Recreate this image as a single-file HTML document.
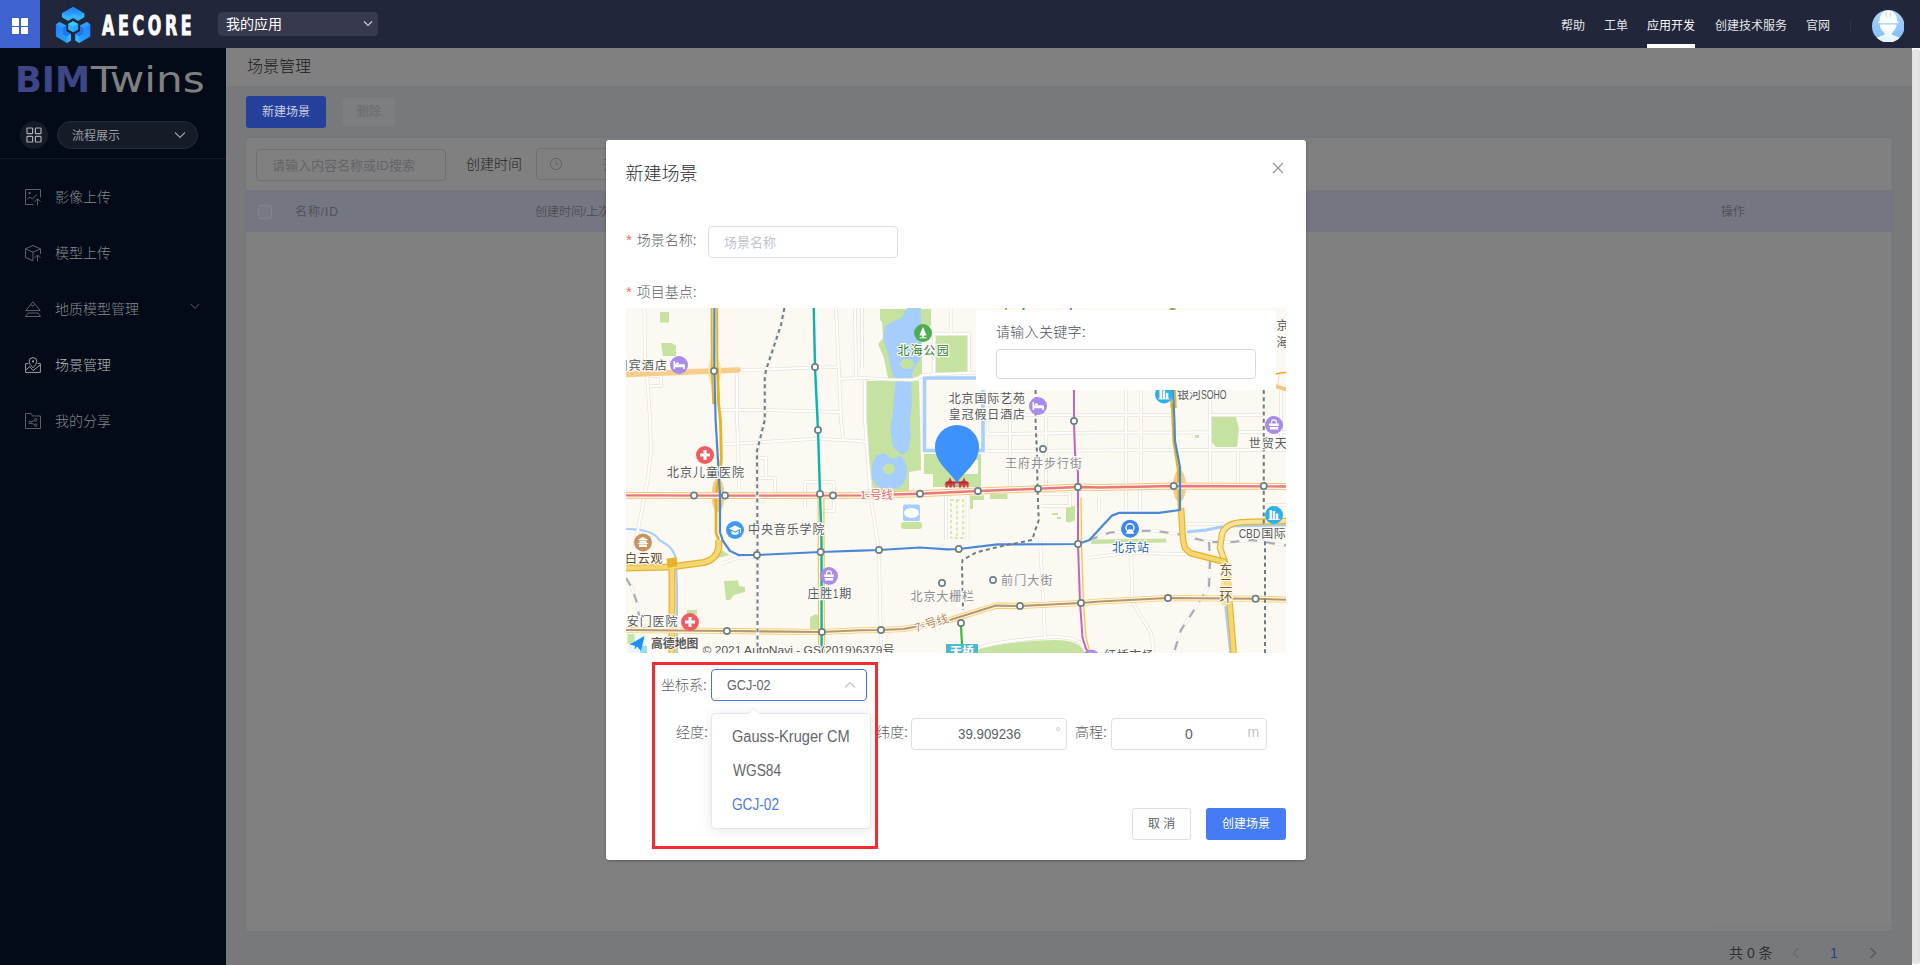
<!DOCTYPE html>
<html lang="zh-CN">
<head>
<meta charset="utf-8">
<title>场景管理</title>
<style>
*{box-sizing:border-box;margin:0;padding:0}
html,body{width:1920px;height:965px;overflow:hidden;background:#78797b}
body{font-family:"Liberation Sans","Noto Sans CJK SC",sans-serif;font-size:14px;color:#333;position:relative;-webkit-font-smoothing:antialiased}
.abs{position:absolute}
.t{position:absolute;white-space:nowrap;line-height:1}
.sx{transform-origin:0 0}
/* ---------- top bar ---------- */
#top{position:absolute;left:0;top:0;width:1920px;height:48px;background:#22263b;z-index:30}
#apps{position:absolute;left:0;top:0;width:40px;height:48px;background:#3e63d0}
#apps i{position:absolute;width:7.7px;height:7.7px;background:#fff;border-radius:.8px}
#appsel{position:absolute;left:218px;top:12px;width:160px;height:24px;background:#373a4e;border-radius:4px}
.nav{position:absolute;top:18.6px;font-size:12px;color:#e4e5e9;line-height:14px;white-space:nowrap}
/* ---------- sidebar ---------- */
#side{position:absolute;left:0;top:48px;width:226px;height:917px;background:#020b17;z-index:20}
.mi{position:absolute;left:55px;font-size:14px;font-weight:300;color:#85888e;line-height:16px;white-space:nowrap}
.mic{position:absolute;left:25px;width:16px;height:16px;overflow:visible}
/* ---------- content (dimmed by mask) ---------- */
#content{position:absolute;left:226px;top:48px;width:1686px;height:917px;background:#78797b;overflow:hidden}
#phead{position:absolute;left:0;top:0;width:1686px;height:38px;background:#808080}
#card{position:absolute;left:19px;top:89px;width:1648px;height:795px;background:#808080;border:1px solid #74767f;border-radius:4px}
#thead{position:absolute;left:0;top:52px;width:1646px;height:42px;background:#747781}
#scroll{position:absolute;left:1912px;top:48px;width:8px;height:917px;background:#fafafa;z-index:25}
#scroll b{position:absolute;left:.2px;top:1.4px;width:7.8px;height:914.2px;border-radius:3.5px;background:linear-gradient(90deg,#e0e0e0,#e5e5e5 40%,#e3e3e3 80%,#dadada)}
/* ---------- modal ---------- */
#modal{position:absolute;left:606px;top:140px;width:700px;height:720px;background:#fff;border-radius:3px;box-shadow:0 1px 3px rgba(0,0,0,.3);z-index:40}
.inp{position:absolute;height:32px;border:1px solid #dcdfe6;border-radius:4px;background:#fff}
.lab{position:absolute;font-size:14px;color:#5c5e62;line-height:16px;white-space:nowrap;font-weight:300}
</style>
</head>
<body>

<!-- ================= CONTENT ================= -->
<div id="content">
  <div id="phead"><span class="t" style="left:21px;top:11px;font-size:16px;color:#1a1b1d;font-weight:300">场景管理</span></div>
  <div class="abs" style="left:20px;top:48px;width:80px;height:32px;background:#24409b;border-radius:3px"><span class="t" style="left:16px;top:10px;font-size:12px;color:#c9cede">新建场景</span></div>
  <div class="abs" style="left:116px;top:49px;width:54px;height:30px;background:#7d7e80;border:1px solid #7a7b7e;border-radius:3px"><span class="t" style="left:14px;top:8px;font-size:12px;color:#6a6b6e">删除</span></div>
  <div id="card">
    <div class="abs" style="left:10px;top:11px;width:190px;height:32px;border:1px solid #6f7074;border-radius:4px"><span class="t" style="left:15px;top:9px;font-size:13px;color:#636467">请输入内容名称或ID搜索</span></div>
    <span class="t" style="left:220px;top:19px;font-size:14px;color:#222325;font-weight:300">创建时间</span>
    <div class="abs" style="left:290px;top:10px;width:220px;height:32px;border:1px solid #6f7074;border-radius:4px">
      <svg class="abs" style="left:12px;top:8px" width="14" height="14" viewBox="0 0 14 14"><circle cx="7" cy="7" r="5.6" fill="none" stroke="#646568" stroke-width="1"/><path d="M7 3.6V7.2H9.8" fill="none" stroke="#646568" stroke-width="1"/></svg>
      <span class="t" style="left:66px;top:9px;font-size:13px;color:#636467">开始日期</span>
    </div>
    <div id="thead">
      <div class="abs" style="left:12px;top:15px;width:14px;height:14px;border:1px solid #82848c;border-radius:2px;background:#787a83"></div>
      <span class="t" style="left:49px;top:16px;font-size:12px;color:#505258;letter-spacing:.9px">名称/ID</span>
      <span class="t" style="left:289px;top:16px;font-size:12px;color:#505258">创建时间/上次修改时间</span>
      <span class="t" style="left:1475px;top:16px;font-size:12px;color:#505258">操作</span>
    </div>
    <div class="abs" style="left:1466px;top:788px;width:180px;height:1px;background:#7a7b80"></div>
  </div>
  <span class="t" style="left:1503px;top:898px;font-size:14px;color:#303134">共 0 条</span>
  <svg class="abs" style="left:1566px;top:899px" width="8" height="12" viewBox="0 0 8 12"><path d="M6.5 1L1.5 6L6.5 11" fill="none" stroke="#66676b" stroke-width="1.3"/></svg>
  <span class="t" style="left:1604px;top:898px;font-size:14px;color:#24409b">1</span>
  <svg class="abs" style="left:1643px;top:899px" width="8" height="12" viewBox="0 0 8 12"><path d="M1.5 1L6.5 6L1.5 11" fill="none" stroke="#55565b" stroke-width="1.3"/></svg>
</div>
<div id="scroll"><b></b></div>

<!-- ================= SIDEBAR ================= -->
<div id="side">
  <span class="t" id="bim" style="left:15px;top:13.2px;font-family:'DejaVu Sans','Liberation Sans',sans-serif;font-size:36.2px;line-height:38px;font-weight:bold;color:#3f4688;transform:scaleX(.974);transform-origin:0 0">BIM</span>
  <span class="t" id="twins" style="left:90.5px;top:13.2px;font-family:'DejaVu Sans','Liberation Sans',sans-serif;font-size:36.2px;line-height:38px;color:#808080;transform:scaleX(1.167);transform-origin:0 0">Twins</span>
  <div class="abs" style="left:20px;top:73px;width:28px;height:28px;border-radius:14px;background:#161b26">
    <svg class="abs" style="left:6px;top:6px" width="16" height="16" viewBox="0 0 16 16" fill="none" stroke="#a9acb3" stroke-width="1.2"><rect x="1" y="1" width="5.6" height="5.6" rx=".6"/><rect x="9.4" y="1" width="5.6" height="5.6" rx=".6"/><rect x="1" y="9.4" width="5.6" height="5.6" rx=".6"/><rect x="9.4" y="9.4" width="5.6" height="5.6" rx=".6"/></svg>
  </div>
  <div class="abs" style="left:57px;top:73px;width:141px;height:28px;border-radius:14px;background:#161c27;border:1px solid #262b36">
    <span class="t" style="left:14px;top:8.3px;font-size:12px;color:#9a9da3">流程展示</span>
    <svg class="abs" style="left:116px;top:9px" width="12" height="8" viewBox="0 0 12 8"><path d="M1 1.5L6 6.5L11 1.5" fill="none" stroke="#9b9ea5" stroke-width="1.2"/></svg>
  </div>
  <div class="abs" style="left:0;top:110px;width:226px;height:1px;background:#141a25"></div>
  <svg class="mic" style="top:141px" viewBox="0 0 16 16" fill="none" stroke="#62666c" stroke-width=".95"><path d="M8.5,15.5H.5V.5H15.5V8.5"/><circle cx="4.6" cy="4.2" r="1.1" fill="#62666c" stroke="none"/><path d="M2.6,10L5,8L7.4,10L11.8,5.4"/><path d="M12.5,16.5V10M9.5,12.8L12.5,9.8L15.5,12.8"/></svg>
  <svg class="mic" style="top:197px" viewBox="0 0 16 16" fill="none" stroke="#62666c" stroke-width=".95"><path d="M8,.5L15.5,3.8L8,7.2L.5,3.8ZM.5,3.8V12.5L8,15.8V7.2M15.5,3.8V9"/><path d="M12.5,16.5V10.5M9.5,13L12.5,10L15.5,13"/></svg>
  <svg class="mic" style="top:253px" viewBox="0 0 16 16" fill="none" stroke="#62666c" stroke-width=".95"><path d="M8,.8L15.2,9.5H.8Z"/><path d="M6.2,4.2L8,5.2L9.2,3.4"/><path d="M3,12H13L15.5,15.5H.5Z"/></svg>
  <svg class="mic" style="top:309px" viewBox="0 0 16 16" fill="none" stroke="#9c9ea3" stroke-width="1"><path d="M8,10.8C5.6,8.2 4.2,6.4 4.2,4.4A3.8,3.8 0 0 1 11.8,4.4C11.8,6.4 10.4,8.2 8,10.8Z"/><circle cx="8" cy="4.4" r="1.1" fill="#9c9ea3" stroke="none"/><path d="M3.4,6.6H.6V15.4H15.4V6.6H12.6"/><path d="M.8,13L4.6,9.6L8,13.6L15,8.2"/></svg>
  <svg class="mic" style="top:365px" viewBox="0 0 16 16" fill="none" stroke="#62666c" stroke-width=".95"><path d="M.5,15.5V.5H6L7.5,3H15.5V15.5Z"/><circle cx="10.8" cy="6.8" r="1.2"/><circle cx="10.8" cy="12.2" r="1.2"/><circle cx="5" cy="9.5" r="1.2"/><path d="M6.1,9L9.7,7.3M6.1,10L9.7,11.7"/></svg>
  <svg class="abs" style="left:190px;top:255px" width="10" height="7" viewBox="0 0 10 7"><path d="M.8,1L5,5.4L9.2,1" fill="none" stroke="#5a5e64" stroke-width="1"/></svg>
  <span class="mi" style="top:141px">影像上传</span>
  <span class="mi" style="top:197px">模型上传</span>
  <span class="mi" style="top:253px">地质模型管理</span>
  <span class="mi" style="top:309px;color:#b4b6ba">场景管理</span>
  <span class="mi" style="top:365px">我的分享</span>
</div>

<!-- ================= TOP BAR ================= -->
<div id="top">
  <div id="apps"><i style="left:11.8px;top:18px"></i><i style="left:20.5px;top:18px"></i><i style="left:11.8px;top:26.7px"></i><i style="left:20.5px;top:26.7px"></i></div>
  <svg class="abs" style="left:54px;top:5px" width="38" height="40" viewBox="54 5 38 40">
    <defs>
      <linearGradient id="lg1" x1="0" y1="0" x2="0" y2="1"><stop offset="0" stop-color="#1b78ff"/><stop offset="1" stop-color="#2fb0ff"/></linearGradient>
      <linearGradient id="lg2" x1="0" y1="0" x2="0" y2="1"><stop offset="0" stop-color="#2aa6ff"/><stop offset="1" stop-color="#36c8fb"/></linearGradient>
      <linearGradient id="lg3" x1="0" y1="0" x2="1" y2="1"><stop offset="0" stop-color="#1c80ff"/><stop offset="1" stop-color="#2ea8ff"/></linearGradient>
      <linearGradient id="lg4" x1="1" y1="0" x2="0" y2="1"><stop offset="0" stop-color="#1c80ff"/><stop offset="1" stop-color="#2ea8ff"/></linearGradient>
    </defs>
    <path d="M73.1,6.9L84.4,13.4V17.2L78.1,20.9L73.1,18.1L68.1,20.9L61.9,17.2V13.4Z" fill="#34b4ff"/>
    <path d="M73.1,6.9L84.4,13.4L78.1,17.1L73.1,14.3L68.1,17.1L61.9,13.4Z" fill="url(#lg1)"/>
    <path d="M73.1,21.2L78.1,24V29.4L73.1,32.2L68.1,29.4V24Z" fill="#2db3f7"/>
    <path d="M73.1,21.2L78.1,24L73.1,26.8L68.1,24Z" fill="#3bc9fc"/>
    <path d="M73.1,26.8L78.1,24V29.4L73.1,32.2Z" fill="#28a9f3"/>
    <path d="M55.9,24.4L59.4,21.9L66.2,25.6V31.2L70.9,34V40.6L66.9,43.1L55.9,36.6Z" fill="url(#lg3)"/>
    <path d="M55.9,24.4L59.4,21.9L66.2,25.6L62.8,28.1Z" fill="#2c9eff"/>
    <path d="M62.8,28.1L66.2,25.6V31.2L70.9,34L67,36.4L62.8,33.8Z" fill="#1b7af2"/>
    <path d="M67,36.4L70.9,34V40.6L66.9,43.1Z" fill="#30b6ff"/>
    <path d="M90.3,24.4L86.9,21.9L80,25.6V31.2L75.3,34V40.6L79.4,43.1L90.3,36.6Z" fill="url(#lg4)"/>
    <path d="M90.3,24.4L86.9,21.9L80,25.6L83.4,28.1Z" fill="#2c9eff"/>
    <path d="M83.4,28.1L80,25.6V31.2L75.3,34L79.2,36.4L83.4,33.8Z" fill="#1b7af2"/>
    <path d="M79.2,36.4L75.3,34V40.6L79.4,43.1Z" fill="#30b6ff"/>
  </svg>
  <span class="t" id="aecore" style="left:102px;top:9.6px;font-family:'DejaVu Sans','Liberation Sans',sans-serif;font-stretch:condensed;font-size:27.2px;line-height:32px;font-weight:bold;color:#fff;letter-spacing:5.6px;-webkit-text-stroke:.9px #fff;transform:scaleX(0.65);transform-origin:0 0">AECORE</span>
  <div id="appsel"><span class="t" style="left:8px;top:5px;font-size:14px;color:#fff">我的应用</span>
    <svg class="abs" style="left:145px;top:8px" width="10" height="8" viewBox="0 0 10 8"><path d="M1 1.5L5 5.5L9 1.5" fill="none" stroke="#c8c9d0" stroke-width="1.2"/></svg></div>
  <span class="nav" style="left:1561px">帮助</span>
  <span class="nav" style="left:1604px">工单</span>
  <span class="nav" style="left:1647px;color:#fff">应用开发</span>
  <div class="abs" style="left:1647px;top:44px;width:48px;height:4px;background:#fff"></div>
  <span class="nav" style="left:1715px">创建技术服务</span>
  <span class="nav" style="left:1806px">官网</span>
  <div class="abs" style="left:1850px;top:20px;width:1.4px;height:12px;background:#2f3349"></div>
  <svg class="abs" id="avatar" style="left:1871.8px;top:9.6px" width="32.6" height="32.6" viewBox="0 0 32 32">
    <defs><linearGradient id="av" x1="0" y1="0" x2="0" y2="1"><stop offset="0" stop-color="#acd6fd"/><stop offset="1" stop-color="#7fbaf6"/></linearGradient>
    <linearGradient id="avb" x1="0" y1="0" x2="0" y2="1"><stop offset="0" stop-color="#fff"/><stop offset="1" stop-color="#e6f1fe"/></linearGradient>
    <clipPath id="avc"><circle cx="16" cy="16" r="16"/></clipPath></defs>
    <circle cx="16" cy="16" r="16" fill="url(#av)"/>
    <g clip-path="url(#avc)">
      <path d="M7.8,14.3h16.2c.3,3 -1.2,4.6 -3.4,7.2c-1.6,1.8 -1.6,2.6 .4,3.4c3,1.1 5.6,2 7.4,3.6v4.5H3.4v-4.5c1.8,-1.6 4.4,-2.5 7.4,-3.6c2,-.8 2,-1.6 .4,-3.4c-2.2,-2.6 -3.7,-4.2 -3.4,-7.2z" fill="url(#avb)"/>
      <path d="M7.3,11.6c0,-7 3.6,-11 8.7,-11s8.7,4 8.7,11z" fill="#fff"/>
      <rect x="6" y="11.2" width="20" height="1.9" rx=".9" fill="#fff"/>
      <path d="M13.2,2.2l.6,5h1l-.4,-5zM18.8,2.2l-.6,5h-1l.4,-5z" fill="#b9dcfd"/>
    </g>
  </svg>
</div>

<!-- ================= MODAL ================= -->
<div id="modal">
  <span class="t" style="left:19.6px;top:24.5px;font-size:18px;color:#2c2d30;font-weight:300">新建场景</span>
  <svg class="abs" style="left:666px;top:22px" width="12" height="12" viewBox="0 0 12 12"><path d="M1 1L11 11M11 1L1 11" stroke="#8c8f96" stroke-width="1.1"/></svg>

  <span class="lab" style="left:20px;top:92px"><span style="color:#f56c6c;font-size:15px;font-weight:400;margin-right:1px">*</span> 场景名称:</span>
  <div class="inp" style="left:102px;top:86px;width:190px"><span class="t" style="left:15px;top:9px;font-size:13px;color:#c0c4cc">场景名称</span></div>
  <span class="lab" style="left:20px;top:144px"><span style="color:#f56c6c;font-size:15px;font-weight:400;margin-right:1px">*</span> 项目基点:</span>

  <div id="map" class="abs" style="left:20px;top:168px;width:660px;height:345px;background:#fcf9f2;overflow:hidden">
<svg width="660" height="345" viewBox="0 0 660 345" style="position:absolute;left:0;top:0;display:block" font-family="Liberation Sans,Noto Sans CJK SC,sans-serif">
<rect width="660" height="345" fill="#fcf9f2"/>
<g fill="#c6e2a0">
<path d="M254,1 L305,1 L305,18 L296,18 L296,66 L287,70 L262,70 L258,50 L252,36 L257,30 L256,14 L254,12Z"/>
<path d="M241,73 L293,73 L294,112 L295,162 L283,164 L283,184 L247,184 L243,150 L241,112Z"/>
<path d="M298,146 L355,146 L355,179 L307,179 L307,166 L298,166Z"/>
<path d="M310,28 L341.5,28 L341.5,64.5 L310,64.5Z"/>
<path d="M34,4 L43,4 L43,14.5 L34,14.5Z"/>
<path d="M35,35 L46,35 L50,38 L50,48 L37,48Z"/>
<path d="M98,273 L112,272.5 L113,278 L119,279 L119,284 L108,287 L104,292 L100,292Z"/>
<path d="M184,309 L190,306 L193,308 L193,321 L184,321Z"/>
<path d="M585,109 L610,109 L613,121 L611,139 L590,139 L585,133Z"/>
<path d="M440,198 L449,198 L449,212 L444,214.5 L440,214Z"/>
<path d="M344,187.5 L358,187.5 L358,192 L347,192 L347,201 L344,201Z"/>
<path d="M364,186 L381.5,186 L381.5,191 L364,191Z"/>
<path d="M465,231.5 L540,230.5 L540,234.5 L465,236Z"/>
<path d="M92,240 L104,247 L92,250Z"/>
<path d="M61,302 L71,302 L71,306 L61,306Z"/>
<path d="M569,127 L573,127 L573,130 L569,130Z"/>
<rect x="275" y="214" width="21" height="7" rx="3"/>
<path d="M352,345 L352,341 Q385,333 428,332 Q450,332 457,341 L458,345 Z"/>
</g>
<rect x="338" y="152" width="14" height="14" fill="#fcf9f2"/>
<g fill="#a6cefc">
<path d="M281.5,0 L295,0 L295,40 L294,52 L288,60 L286,66 L286,70 L268,70 L265,60 L262,45 L257,30 L259,18 L266,14 L275,10Z"/>
<path d="M270,72 L285,72 L286,95 L284,112 L285,128 L282,143 L276,147 L267,139 L264,122 L267,104 L268,88Z"/>
<path d="M251,147 Q258,143 262,148 L268,151 Q272,146 277,150 Q283,158 280,170 Q277,181 264,181 Q250,182 246,170 Q244,155 251,147Z"/>
<rect x="277" y="196.4" width="17" height="16.6" rx="2"/>
</g>
<ellipse cx="281" cy="56" rx="7" ry="5" fill="#c6e2a0"/>
<ellipse cx="263" cy="161" rx="6" ry="5.5" fill="#c6e2a0"/>
<ellipse cx="285.5" cy="205" rx="7.5" ry="5" fill="#fff"/>
<g fill="none" stroke="#a6cefc">
<path d="M0,221 C20,221 30,226 33,232 C45,238 49,244 50,252 L51,278 L51,345" stroke-width="2"/>
<path d="M561,224 L580,222 L600,218 L660,217" stroke-width="3"/>
<path d="M600,298 L605,345" stroke-width="3.5"/>
<rect x="298.5" y="70" width="58.5" height="72.5" stroke-width="3.6" stroke="#a9d0fb"/>
</g>
<g fill="none" stroke="#c6e2a0" stroke-width="1.4" stroke-dasharray="3 2.5"><rect x="325" y="192" width="12" height="38"/><path d="M331,192V230"/></g>
<g fill="#c6e2a0"><rect x="426" y="205" width="6" height="2"/><rect x="431" y="209" width="4" height="2"/></g>
<g fill="none" stroke="#e8e3d9" stroke-width="3.6" stroke-linejoin="round">
<path d="M18.4,0 L19,50 L21,67 L24,112 L25,143 L22,170 L11.5,224.5 L8,240"/>
<path d="M112,62 L140,61.5 L189,59.5 L212,59"/>
<path d="M210,0 L212.75,59.5 L215,112 L217,131"/>
<path d="M229,0 L230,70"/>
<path d="M213,70.75 L240,70 L262,71.5 L285,72 L292,70.5 L296.5,67 L350,64.5"/>
<path d="M111,64 L111,112 L112,135 L113,182"/>
<path d="M94,102 L139,102 L214,104"/>
<path d="M24,68 L35,68 L35,78 L24,78"/>
<path d="M96.5,136.4 L191.5,130.75 L234,133 L240,134"/>
<path d="M308,68 L308,26 L343,26 L343,66"/>
<path d="M324.6,0 L324.6,26"/>
<path d="M239,72 L239,112 L245,193 L251.5,232 L253,242 L255,345"/>
<path d="M320,188 L320,232"/>
<path d="M341.5,188 L341.5,232"/>
<path d="M361.5,82 L361.5,126.4 L474,124.5 L546.5,124.5 L584,124.3"/>
<path d="M614,124 L660,124"/>
<path d="M361.5,143 L552,142"/>
<path d="M361.5,107 L546,107"/>
<path d="M514.8,82 L514.8,178"/>
<path d="M420,107 L420,178"/>
<path d="M236,0 L236,60"/>
<path d="M140,170 L140,150 L131.5,150"/>
<path d="M384,82 L384,180"/>
<path d="M500,82 L500,202"/>
<path d="M552.75,142 L660,142"/>
<path d="M584,82 L584,175"/>
<path d="M582.75,107 L637,107"/>
<path d="M414,232 L419,330"/>
<path d="M505,244.5 L506.5,294.5 L525,324.5 L527.75,345"/>
<path d="M179,200 L179,174 L207.75,174 L207.75,203 L197,203"/>
<path d="M131.5,170 L149,170 L149,185"/>
<path d="M514,182 L514,202"/>
<path d="M560,215.75 L599,215.75"/>
<path d="M473,190 L473,205"/>
<path d="M612,142 L612,178"/>
<path d="M640,197 L660,197"/>
<path d="M462,250 L500,245 L560,246"/>
<path d="M97,255 L112,250 L131,249"/>
<path d="M655,82 L655,142"/>
<path d="M415,186 L444,186 L444,198 L415,198"/>
<path d="M340,345 Q362,333 428,329 Q452,329 460,340"/>
</g>
<g fill="none" stroke="#ffffff" stroke-width="2.2" stroke-linejoin="round">
<path d="M18.4,0 L19,50 L21,67 L24,112 L25,143 L22,170 L11.5,224.5 L8,240"/>
<path d="M112,62 L140,61.5 L189,59.5 L212,59"/>
<path d="M210,0 L212.75,59.5 L215,112 L217,131"/>
<path d="M229,0 L230,70"/>
<path d="M213,70.75 L240,70 L262,71.5 L285,72 L292,70.5 L296.5,67 L350,64.5"/>
<path d="M111,64 L111,112 L112,135 L113,182"/>
<path d="M94,102 L139,102 L214,104"/>
<path d="M24,68 L35,68 L35,78 L24,78"/>
<path d="M96.5,136.4 L191.5,130.75 L234,133 L240,134"/>
<path d="M308,68 L308,26 L343,26 L343,66"/>
<path d="M324.6,0 L324.6,26"/>
<path d="M239,72 L239,112 L245,193 L251.5,232 L253,242 L255,345"/>
<path d="M320,188 L320,232"/>
<path d="M341.5,188 L341.5,232"/>
<path d="M361.5,82 L361.5,126.4 L474,124.5 L546.5,124.5 L584,124.3"/>
<path d="M614,124 L660,124"/>
<path d="M361.5,143 L552,142"/>
<path d="M361.5,107 L546,107"/>
<path d="M514.8,82 L514.8,178"/>
<path d="M420,107 L420,178"/>
<path d="M236,0 L236,60"/>
<path d="M140,170 L140,150 L131.5,150"/>
<path d="M384,82 L384,180"/>
<path d="M500,82 L500,202"/>
<path d="M552.75,142 L660,142"/>
<path d="M584,82 L584,175"/>
<path d="M582.75,107 L637,107"/>
<path d="M414,232 L419,330"/>
<path d="M505,244.5 L506.5,294.5 L525,324.5 L527.75,345"/>
<path d="M179,200 L179,174 L207.75,174 L207.75,203 L197,203"/>
<path d="M131.5,170 L149,170 L149,185"/>
<path d="M514,182 L514,202"/>
<path d="M560,215.75 L599,215.75"/>
<path d="M473,190 L473,205"/>
<path d="M612,142 L612,178"/>
<path d="M640,197 L660,197"/>
<path d="M462,250 L500,245 L560,246"/>
<path d="M97,255 L112,250 L131,249"/>
<path d="M655,82 L655,142"/>
<path d="M415,186 L444,186 L444,198 L415,198"/>
<path d="M340,345 Q362,333 428,329 Q452,329 460,340"/>
</g>
<path d="M463,232 L484,224.5 L527,222.6 L551.5,226 L583,234 L606,234 L626.5,232 L660,237.6" fill="none" stroke="#e4e4e0" stroke-width="3.2"/>
<path d="M463,232 L484,224.5 L527,222.6 L551.5,226 L583,234 L606,234 L626.5,232 L660,237.6" fill="none" stroke="#fff" stroke-width="2"/>
<path d="M463,232 L484,224.5 L527,222.6 L551.5,226 L583,234 L606,234 L626.5,232 L660,237.6" fill="none" stroke="#a5abae" stroke-width="2" stroke-dasharray="9 9"/>
<path d="M583,234 L584,253 L583,278 L566.5,304.5 L555,322 L547.75,345" fill="none" stroke="#e4e4e0" stroke-width="3.2"/>
<path d="M583,234 L584,253 L583,278 L566.5,304.5 L555,322 L547.75,345" fill="none" stroke="#fff" stroke-width="2"/>
<path d="M583,234 L584,253 L583,278 L566.5,304.5 L555,322 L547.75,345" fill="none" stroke="#a5abae" stroke-width="2" stroke-dasharray="9 9"/>
<path d="M0,270 L6,280 L11,295 L13,308" fill="none" stroke="#e4e4e0" stroke-width="3.2"/>
<path d="M0,270 L6,280 L11,295 L13,308" fill="none" stroke="#fff" stroke-width="2"/>
<path d="M0,270 L6,280 L11,295 L13,308" fill="none" stroke="#a5abae" stroke-width="2" stroke-dasharray="9 9"/>
<path d="M0,66.4 L112,62" fill="none" stroke="#f6cd8b" stroke-width="5.6" stroke-linecap="round"/>
<ellipse cx="88.5" cy="63" rx="6.5" ry="15" fill="#f7e2a0"/>
<ellipse cx="92" cy="187" rx="6.5" ry="17" fill="#f3cc8a"/>
<ellipse cx="553.5" cy="178" rx="6.5" ry="16" fill="#f3cc8a"/>
<path d="M88.4,0 L88.6,62 L90,96" fill="none" stroke="#e7b41f" stroke-width="7.5" stroke-linejoin="round"/>
<path d="M88.4,0 L88.6,62 L90,96" fill="none" stroke="#fdf4d4" stroke-width="3.7" stroke-linejoin="round"/>
<path d="M91.6,60 L92.6,96 L94.4,112 L95.4,150 L94.4,164 L91.2,178 L90,190 L90,225 L92.75,232" fill="none" stroke="#e6b422" stroke-width="2.8" stroke-linejoin="round"/>
<path d="M92.75,232 L92.75,239 Q91,251 78,254.5 L44,259 L0,260" fill="none" stroke="#e5b32e" stroke-width="7" stroke-linejoin="round"/>
<path d="M46,258 L46,345" fill="none" stroke="#e5b32e" stroke-width="7"/>
<path d="M92.75,232 L92.75,239 Q91,251 78,254.5 L44,259 L0,260" fill="none" stroke="#f6d670" stroke-width="4.6" stroke-linejoin="round"/>
<path d="M46,258 L46,345" fill="none" stroke="#f6d670" stroke-width="4.6"/>
<rect x="41" y="250" width="10" height="9" fill="#e5b32e" transform="rotate(-8 46 254)"/>
<path d="M546.5,0 L547,82 L547.6,100" fill="none" stroke="#e7b41f" stroke-width="6.2" stroke-linejoin="round"/>
<path d="M546.5,0 L547,82 L547.6,100" fill="none" stroke="#fdf4d4" stroke-width="2.4000000000000004" stroke-linejoin="round"/>
<path d="M546,96 L546.6,112 L547.6,133 L551.8,160 L552.6,180 L553,202" fill="none" stroke="#e6b422" stroke-width="2.4" stroke-linejoin="round"/>
<path d="M660,213 L620,214 Q600,214 596,226 L594,240 L599,254" fill="none" stroke="#e5b32e" stroke-width="6.5" stroke-linejoin="round"/>
<path d="M660,213 L620,214 Q600,214 596,226 L594,240 L599,254" fill="none" stroke="#f9e39a" stroke-width="4.2" stroke-linejoin="round"/>
<path d="M555,200 L557,232 L559,240 L564,245 L599,254 L604,299.5 L607.75,345" fill="none" stroke="#e5b32e" stroke-width="6.5" stroke-linejoin="round" />
<path d="M555,200 L557,232 L559,240 L564,245 L599,254 L604,299.5 L607.75,345" fill="none" stroke="#f6d670" stroke-width="4.3" stroke-linejoin="round" />
<rect x="595" y="255" width="11" height="42" fill="#f7dc80" opacity=".75"/>
<path d="M0,187.4 L99,187.6 L234,187.4 L294,185.75 L351.9,183 L412,180.75 L451.9,179 L474,179.5 L547.75,178 L660,178.5" fill="none" stroke="#f3c67e" stroke-width="6.8"/>
<path d="M0,187.4 L99,187.6 L234,187.4 L294,185.75 L351.9,183 L412,180.75 L451.9,179 L474,179.5 L547.75,178 L660,178.5" fill="none" stroke="#fffaf0" stroke-width="4.8"/>
<path d="M0,187.4 L99,187.6 L234,187.4 L294,185.75 L351.9,183 L412,180.75 L451.9,179 L474,179.5 L547.75,178 L660,178.5" fill="none" stroke="#e9777b" stroke-width="2.3"/>
<path d="M0,322 L100.9,323 L195.9,324 L234,322.25 L255,322 L277.75,321 L324,312 L370,297.6 L394,298 L455,295 L474,293.5 L542,290 L629.6,290.75 L660,291.75" fill="none" stroke="#f2cf6e" stroke-width="6.2" stroke-linejoin="round"/>
<path d="M0,322 L100.9,323 L195.9,324 L234,322.25 L255,322 L277.75,321 L324,312 L370,297.6 L394,298 L455,295 L474,293.5 L542,290 L629.6,290.75 L660,291.75" fill="none" stroke="#fff8e4" stroke-width="4.4" stroke-linejoin="round"/>
<path d="M0,322 L100.9,323 L195.9,324 L234,322.25 L255,322 L277.75,321 L324,312 L370,297.6 L394,298 L455,295 L474,293.5 L542,290 L629.6,290.75 L660,291.75" fill="none" stroke="#b8966f" stroke-width="2.1" stroke-linejoin="round"/>
<path d="M195,190 L195.6,345" fill="none" stroke="#f1c95a" stroke-width="7"/>
<path d="M195,190 L195.6,345" fill="none" stroke="#fff8e4" stroke-width="4.6"/>
<path d="M455,190 L455.5,236 L457.5,294.5 L460,329.5 L463,341" fill="none" stroke="#f1c95a" stroke-width="1.4"/>
<path d="M88.4,0 L88.3,62 L89.6,112 L94,187 L94,224.5 L97,233 L104,243 L112.75,247 L130.9,247 L194.6,244 L234,242.6 L253,242 L294,239.5 L321.5,241.4 L332.75,241 L371.5,236.4 L452,236 L463.4,232 L486,207.6 L493.4,204.8 L532.75,204.8 L554,202 L554,159.5 L549,133 L548.4,112 L547,82 L546.5,0" fill="none" stroke="#4a88d6" stroke-width="2.2" stroke-linejoin="round"/>
<path d="M187.75,0 L189,59 L191.5,112 L192,122 L194,185.75 L195.5,232 L195.6,345" fill="none" stroke="#06b6ad" stroke-width="2.4" stroke-linejoin="round"/>
<path d="M445,0 L448,82 L448,113 L449,145.75 L452,164.5 L452,236 L454,294.5 L456.5,329.5 L460,341 L465,345" fill="none" stroke="#c963b6" stroke-width="2" stroke-linejoin="round"/>
<path d="M335,318 L336,336" fill="none" stroke="#3db54a" stroke-width="2.2" stroke-linejoin="round"/>
<rect x="379" y="0" width="2" height="2" fill="#e8a020"/><rect x="396.5" y="0" width="2" height="2" fill="#2db34a"/>
<path d="M650,66 Q655,64.5 660,64.5" fill="none" stroke="#e8a21c" stroke-width="1.6"/><path d="M650,78 L660,81.5" fill="none" stroke="#f3c57c" stroke-width="4"/><path d="M653,66 L652,78" fill="none" stroke="#e8e3d9" stroke-width="1.2"/>
<path d="M158.4,0 L155,17 L140,62 L138.75,70 L138.75,112 L131,143 L131.5,232 L131.5,345" fill="none" stroke="#e4e2dc" stroke-width="3.6"/>
<path d="M158.4,0 L155,17 L140,62 L138.75,70 L138.75,112 L131,143 L131.5,232 L131.5,345" fill="none" stroke="#fff" stroke-width="2.6"/>
<path d="M158.4,0 L155,17 L140,62 L138.75,70 L138.75,112 L131,143 L131.5,232 L131.5,345" fill="none" stroke="#6d7d85" stroke-width="2" stroke-dasharray="4 3.2"/>
<path d="M409.6,82 L409.6,115.75 L411,145.75 L411.5,180.75 L412.75,212 L406,232 L371.5,239 L350,244.5 L336.5,252 L336,257 L337,302" fill="none" stroke="#6d7d85" stroke-width="2" stroke-dasharray="4 3.2"/>
<path d="M637.75,82 L637.75,214.5 L639,232 L639,345" fill="none" stroke="#6d7d85" stroke-width="2" stroke-dasharray="4 3.2"/>
<g fill="#fff" stroke="#6b8088" stroke-width="1.7">
<circle cx="88" cy="62.9" r="3.1"/>
<circle cx="189" cy="59" r="3.1"/>
<circle cx="192" cy="122" r="3.1"/>
<circle cx="68" cy="187.5" r="3.1"/>
<circle cx="99" cy="187.5" r="3.1"/>
<circle cx="194" cy="186" r="3.1"/>
<circle cx="207" cy="187.5" r="3.1"/>
<circle cx="130.9" cy="247" r="3.1"/>
<circle cx="194.6" cy="244" r="3.1"/>
<circle cx="100.9" cy="323" r="3.1"/>
<circle cx="195.9" cy="324" r="3.1"/>
<circle cx="253" cy="242" r="3.1"/>
<circle cx="332.75" cy="241" r="3.1"/>
<circle cx="452" cy="236" r="3.1"/>
<circle cx="316" cy="275" r="3.1"/>
<circle cx="367" cy="272" r="3.1"/>
<circle cx="255" cy="322" r="3.1"/>
<circle cx="394" cy="298" r="3.1"/>
<circle cx="455" cy="295" r="3.1"/>
<circle cx="335" cy="315" r="3.1"/>
<circle cx="294" cy="185.75" r="3.1"/>
<circle cx="351.9" cy="183" r="3.1"/>
<circle cx="412" cy="180.75" r="3.1"/>
<circle cx="451.9" cy="179" r="3.1"/>
<circle cx="417" cy="141" r="3.1"/>
<circle cx="448" cy="113" r="3.1"/>
<circle cx="547.75" cy="178" r="3.1"/>
<circle cx="637.75" cy="178" r="3.1"/>
<circle cx="542" cy="290" r="3.1"/>
<circle cx="629.6" cy="290.75" r="3.1"/>
</g>
<circle cx="53" cy="57" r="9" fill="#a98ce9"/>
<g transform="translate(53 57)" fill="#fff" stroke="none"><path d="M-5.5,-4h1.6v3.2h8.6a1.2,1.2 0 0 1 1.2,1.2v3.6h-1.6v-1.8h-8.2v1.8h-1.6z"/><rect x="-3.2" y="-2.6" width="3" height="1.6" rx=".5"/></g>
<circle cx="79" cy="147" r="9" fill="#f15c62"/>
<g transform="translate(79 147)" fill="#fff" stroke="none"><rect x="-5" y="-1.5" width="10" height="3"/><rect x="-1.5" y="-5" width="3" height="10"/></g>
<circle cx="109" cy="222" r="9" fill="#3d9bf5"/>
<g transform="translate(109 222)" fill="#fff" stroke="none"><path d="M-6,-1.5L0,-4.5L6,-1.5L0,1.5z"/><path d="M-3.5,0.8v3.2q3.5,1.6 7,0v-3.2L0,2.8z"/><rect x="5" y="-1.5" width=".9" height="4.5"/></g>
<circle cx="17" cy="234.5" r="9" fill="#c7935f"/>
<g transform="translate(17 234.5)" fill="#fff" stroke="none"><path d="M-5.5,-2.5L0,-5.5L5.5,-2.5z"/><rect x="-3.5" y="-2" width="7" height="2"/><path d="M-5.5,1.5L-3.5,0h7L5.5,1.5z"/><rect x="-4" y="2" width="8" height="2.5"/></g>
<circle cx="64" cy="314" r="9" fill="#f15c62"/>
<g transform="translate(64 314)" fill="#fff" stroke="none"><rect x="-5" y="-1.5" width="10" height="3"/><rect x="-1.5" y="-5" width="3" height="10"/></g>
<circle cx="203" cy="268" r="9" fill="#a98ce9"/>
<g transform="translate(203 268)" fill="#fff" stroke="none"><path d="M-5,-1.5h10l-1,6h-8z"/><path d="M-2.5,-1.5v-1.2a2.5,2.5 0 0 1 5,0v1.2" fill="none" stroke="#fff" stroke-width="1.2"/><rect x="-5" y="1" width="10" height="1" fill="#a98ce9"/></g>
<circle cx="297" cy="25" r="9" fill="#4cae50"/>
<g transform="translate(297 25)" fill="#fff" stroke="none"><path d="M0,-6L3.6,2.5H-3.6z"/><rect x="-.8" y="2" width="1.6" height="2.5"/><rect x="-3.5" y="4.3" width="7" height="1"/></g>
<circle cx="412" cy="98" r="9" fill="#a98ce9"/>
<g transform="translate(412 98)" fill="#fff" stroke="none"><path d="M-5.5,-4h1.6v3.2h8.6a1.2,1.2 0 0 1 1.2,1.2v3.6h-1.6v-1.8h-8.2v1.8h-1.6z"/><rect x="-3.2" y="-2.6" width="3" height="1.6" rx=".5"/></g>
<circle cx="504" cy="220.75" r="9" fill="#3d86f0"/>
<g transform="translate(504 220.75)" fill="#fff" stroke="none"><circle cx="0" cy="-1" r="4" fill="none" stroke="#fff" stroke-width="1.4"/><path d="M-4.5,5L-1.5,0.5h3L4.5,5z"/></g>
<circle cx="538" cy="86.4" r="9" fill="#2ab3ea"/>
<g transform="translate(538 86.4)" fill="#fff" stroke="none"><rect x="-4.5" y="-5" width="2.6" height="9.5"/><rect x="-1.2" y="-4" width="2.4" height="8.5"/><rect x="1.9" y="-1.5" width="2.4" height="6"/><rect x="-5.5" y="4" width="11" height="1"/></g>
<circle cx="648" cy="117" r="9" fill="#a98ce9"/>
<g transform="translate(648 117)" fill="#fff" stroke="none"><path d="M-5,-1.5h10l-1,6h-8z"/><path d="M-2.5,-1.5v-1.2a2.5,2.5 0 0 1 5,0v1.2" fill="none" stroke="#fff" stroke-width="1.2"/><rect x="-5" y="1" width="10" height="1" fill="#a98ce9"/></g>
<circle cx="648" cy="207" r="9" fill="#2ab3ea"/>
<g transform="translate(648 207)" fill="#fff" stroke="none"><rect x="-4.5" y="-5" width="2.6" height="9.5"/><rect x="-1.2" y="-4" width="2.4" height="8.5"/><rect x="1.9" y="-1.5" width="2.4" height="6"/><rect x="-5.5" y="4" width="11" height="1"/></g>
<circle cx="465" cy="350.4" r="9" fill="#a98ce9"/>
<g transform="translate(465 350.4)" fill="#fff" stroke="none"><path d="M-5,-1.5h10l-1,6h-8z"/><path d="M-2.5,-1.5v-1.2a2.5,2.5 0 0 1 5,0v1.2" fill="none" stroke="#fff" stroke-width="1.2"/><rect x="-5" y="1" width="10" height="1" fill="#a98ce9"/></g>
<text x="-10.5" y="61.5" font-size="12" fill="#565a5f" text-anchor="start" stroke="#fcfaf5" stroke-width="2.4" stroke-linejoin="round" paint-order="stroke" textLength="51.5" lengthAdjust="spacing" >国宾酒店</text>
<text x="41" y="169" font-size="12" fill="#565a5f" text-anchor="start" stroke="#fcfaf5" stroke-width="2.4" stroke-linejoin="round" paint-order="stroke" textLength="77" lengthAdjust="spacing" >北京儿童医院</text>
<text x="122" y="226" font-size="12" fill="#565a5f" text-anchor="start" stroke="#fcfaf5" stroke-width="2.4" stroke-linejoin="round" paint-order="stroke" textLength="76.4" lengthAdjust="spacing" >中央音乐学院</text>
<text x="-1" y="254.5" font-size="12" fill="#6b4a30" text-anchor="start" stroke="#fcfaf5" stroke-width="2.4" stroke-linejoin="round" paint-order="stroke" textLength="37.5" lengthAdjust="spacing" >白云观</text>
<text x="-12" y="318" font-size="12" fill="#565a5f" text-anchor="start" stroke="#fcfaf5" stroke-width="2.4" stroke-linejoin="round" paint-order="stroke" textLength="63.5" lengthAdjust="spacing" >广安门医院</text>
<text x="181.5" y="289.5" font-size="12" fill="#565a5f" text-anchor="start" stroke="#fcfaf5" stroke-width="2.4" stroke-linejoin="round" paint-order="stroke" ><tspan letter-spacing=".7">庄胜</tspan><tspan textLength="5.2" lengthAdjust="spacingAndGlyphs">1</tspan><tspan dx="1.2">期</tspan></text>
<text x="271.5" y="47" font-size="12" fill="#2f8132" text-anchor="start" stroke="#fcfaf5" stroke-width="2.4" stroke-linejoin="round" paint-order="stroke" textLength="51.2" lengthAdjust="spacing" >北海公园</text>
<text x="322.75" y="94.5" font-size="12" fill="#565a5f" text-anchor="start" stroke="#fcfaf5" stroke-width="2.4" stroke-linejoin="round" paint-order="stroke" textLength="76.3" lengthAdjust="spacing" >北京国际艺苑</text>
<text x="322.75" y="110.5" font-size="12" fill="#565a5f" text-anchor="start" stroke="#fcfaf5" stroke-width="2.4" stroke-linejoin="round" paint-order="stroke" textLength="76.3" lengthAdjust="spacing" >皇冠假日酒店</text>
<text x="379" y="159.5" font-size="12" fill="#8b8e92" text-anchor="start" stroke="#fcfaf5" stroke-width="2.4" stroke-linejoin="round" paint-order="stroke" textLength="77" lengthAdjust="spacing" >王府井步行街</text>
<text x="375" y="276.5" font-size="12" fill="#8b8e92" text-anchor="start" stroke="#fcfaf5" stroke-width="2.4" stroke-linejoin="round" paint-order="stroke" textLength="51.5" lengthAdjust="spacing" >前门大街</text>
<text x="284.6" y="293" font-size="12" fill="#8b8e92" text-anchor="start" stroke="#fcfaf5" stroke-width="2.4" stroke-linejoin="round" paint-order="stroke" textLength="63.5" lengthAdjust="spacing" >北京大栅栏</text>
<text x="234" y="191" font-size="11.5" fill="#e8696e" text-anchor="start" stroke="#fcfaf5" stroke-width="2.4" stroke-linejoin="round" paint-order="stroke" textLength="33" lengthAdjust="spacing" >1-号线</text>
<text x="290" y="324.3" font-size="12" fill="#b38e66" text-anchor="start" stroke="#fcfaf5" stroke-width="2.4" stroke-linejoin="round" paint-order="stroke" textLength="35" lengthAdjust="spacing" transform="rotate(-17.5 290 324.3)">7-号线</text>
<text x="486" y="243.5" font-size="12" fill="#2566b5" text-anchor="start" stroke="#fcfaf5" stroke-width="2.4" stroke-linejoin="round" paint-order="stroke" textLength="37" lengthAdjust="spacing" >北京站</text>
<text x="551" y="91" font-size="12" fill="#565a5f" text-anchor="start" stroke="#fcfaf5" stroke-width="2.4" stroke-linejoin="round" paint-order="stroke" >银河<tspan textLength="25.5" lengthAdjust="spacingAndGlyphs">SOHO</tspan></text>
<text x="622.75" y="139.5" font-size="12" fill="#565a5f" text-anchor="start" stroke="#fcfaf5" stroke-width="2.4" stroke-linejoin="round" paint-order="stroke" textLength="51" lengthAdjust="spacing" >世贸天阶</text>
<text x="612.75" y="229.5" font-size="12" fill="#565a5f" text-anchor="start" stroke="#fcfaf5" stroke-width="2.4" stroke-linejoin="round" paint-order="stroke" ><tspan textLength="21.5" lengthAdjust="spacingAndGlyphs">CBD</tspan><tspan dx="1" letter-spacing=".6">国际大厦</tspan></text>
<text x="593.5" y="266.3" font-size="13" fill="#7a5a2f" text-anchor="start" stroke="#fcfaf5" stroke-width="2.4" stroke-linejoin="round" paint-order="stroke" >东</text>
<text x="593.5" y="280" font-size="13" fill="#7a5a2f" text-anchor="start" stroke="#fcfaf5" stroke-width="2.4" stroke-linejoin="round" paint-order="stroke" >二</text>
<text x="593.5" y="293.3" font-size="13" fill="#7a5a2f" text-anchor="start" stroke="#fcfaf5" stroke-width="2.4" stroke-linejoin="round" paint-order="stroke" >环</text>
<text x="478" y="352" font-size="12" fill="#565a5f" text-anchor="start" stroke="#fcfaf5" stroke-width="2.4" stroke-linejoin="round" paint-order="stroke" textLength="50" lengthAdjust="spacing" >红桥市场</text>
<text x="637.5" y="22" font-size="12" fill="#565a5f" text-anchor="start" stroke="#fcfaf5" stroke-width="2.4" stroke-linejoin="round" paint-order="stroke" textLength="25" lengthAdjust="spacing" >北京</text>
<text x="637.5" y="38.5" font-size="12" fill="#565a5f" text-anchor="start" stroke="#fcfaf5" stroke-width="2.4" stroke-linejoin="round" paint-order="stroke" textLength="25" lengthAdjust="spacing" >上海</text>
<rect x="320" y="336" width="32" height="12" fill="#4bb9cd"/>
<text x="324" y="347.5" font-size="12" fill="#fff" textLength="24" font-weight="bold">天桥</text>
<ellipse cx="331" cy="176" rx="13" ry="3.2" fill="#888" opacity=".45"/>
<g fill="#d83a3d"><path d="M319.5,179.5v-5.5h2.2l2.3,-4.5l2.3,4.5h2.7v5.5h-1.6v-2.2h-1.6v2.2h-2.4v-2.2h-1.6v2.2z"/><path d="M333,179.5v-5.5h2.7l2.3,-4.5l2.3,4.5h2.2v5.5h-1.6v-2.2h-1.6v2.2h-2.4v-2.2h-1.6v2.2z"/></g>
<rect x="320" y="173.6" width="22" height="1.6" fill="#b02a2e"/>
<path d="M331,175.5 C326,165 309,156 309,139 A22,22 0 0 1 353,139 C353,156 336,165 331,175.5Z" fill="#3e92fb"/>
<rect x="1.5" y="326" width="19.5" height="19" rx="2" fill="#eef4f6" opacity=".9"/>
<rect x="1.5" y="326" width="7" height="10" fill="#bfe6a0" opacity=".9"/><rect x="14" y="338" width="7" height="7" fill="#8edcf5" opacity=".9"/>
<path d="M3.5,336.5L18.5,328L15,343L11,338.5L8.8,341.5L8.8,337.8Z" fill="#1890ff"/>
<text x="25" y="339.5" font-size="12" font-weight="bold" fill="#595959" stroke="#fcfaf5" stroke-width="1.6" paint-order="stroke" textLength="47.5" lengthAdjust="spacingAndGlyphs">高德地图</text>
<text x="76.5" y="346" font-size="11" fill="#555" stroke="#fcfaf5" stroke-width="2" paint-order="stroke" textLength="192" lengthAdjust="spacingAndGlyphs">© 2021 AutoNavi - GS(2019)6379号</text>
</svg>
    <div class="abs" style="left:350px;top:2px;width:300px;height:80px;background:#fff">
      <span class="t" style="left:20px;top:14.5px;font-size:14px;color:#4e5054;letter-spacing:.3px;font-weight:300">请输入关键字:</span>
      <div class="abs" style="left:20px;top:39px;width:260px;height:30px;border:1px solid #d3d8e2;border-radius:4px;background:#fff"></div>
    </div>
  </div>

    <span class="lab" style="left:55px;top:537px">坐标系:</span>
  <div class="inp" style="left:105px;top:529px;width:156px;height:32px;border-color:#4272f0"><span class="t sx" style="left:15px;top:7.2px;font-size:15px;color:#64666a;transform:scaleX(.845)">GCJ-02</span>
    <svg class="abs" style="left:132px;top:11px" width="12" height="8" viewBox="0 0 12 8"><path d="M1 6.5L6 1.5L11 6.5" fill="none" stroke="#c0c4cc" stroke-width="1.2"/></svg></div>
  <span class="lab" style="left:70px;top:584px">经度:</span>
  <span class="lab" style="left:270px;top:584px">纬度:</span>
  <div class="inp" style="left:305px;top:578px;width:156px"><span class="t sx" style="left:46px;top:8px;font-size:14.5px;color:#606266;transform:scaleX(.918)">39.909236</span><span class="t" style="left:143.5px;top:6px;font-size:13px;color:#c0c4cc">°</span></div>
  <span class="lab" style="left:469px;top:584px">高程:</span>
  <div class="inp" style="left:505px;top:578px;width:156px"><span class="t" style="left:73px;top:8px;font-size:14px;color:#606266">0</span><span class="t" style="left:135.5px;top:6px;font-size:14px;color:#c0c4cc;letter-spacing:0">m</span></div>

  <div class="abs" id="pop" style="left:105px;top:573px;width:159.5px;height:116px;background:#fff;border:1px solid #e4e7ed;border-radius:4px;box-shadow:0 2px 12px rgba(0,0,0,.1)">
    <div class="abs" style="left:36.5px;top:-5.2px;width:9px;height:9px;background:#fff;border-left:1px solid #e8ebf0;border-top:1px solid #e8ebf0;transform:rotate(45deg)"></div>
    <span class="t sx" style="left:20px;top:14.5px;font-size:16px;color:#64666a;transform:scaleX(.913)">Gauss-Kruger CM</span>
    <span class="t sx" style="left:20.5px;top:48.5px;font-size:16px;color:#64666a;transform:scaleX(.86)">WGS84</span>
    <span class="t sx" style="left:20px;top:82.5px;font-size:16px;color:#4a7af2;transform:scaleX(.852)">GCJ-02</span>
  </div>

  <div class="abs" style="left:526px;top:668px;width:59px;height:32px;border:1px solid #dcdfe6;border-radius:3px"><span class="t" style="left:15px;top:9px;font-size:12px;color:#606266">取 消</span></div>
  <div class="abs" style="left:600px;top:668px;width:80px;height:32px;background:#457bf5;border-radius:3px"><span class="t" style="left:16px;top:10px;font-size:12px;color:#fff">创建场景</span></div>
  <div class="abs" style="left:46.25px;top:522.25px;width:225.5px;height:186.75px;border:3px solid #f72b30"></div>
</div>
</body>
</html>
